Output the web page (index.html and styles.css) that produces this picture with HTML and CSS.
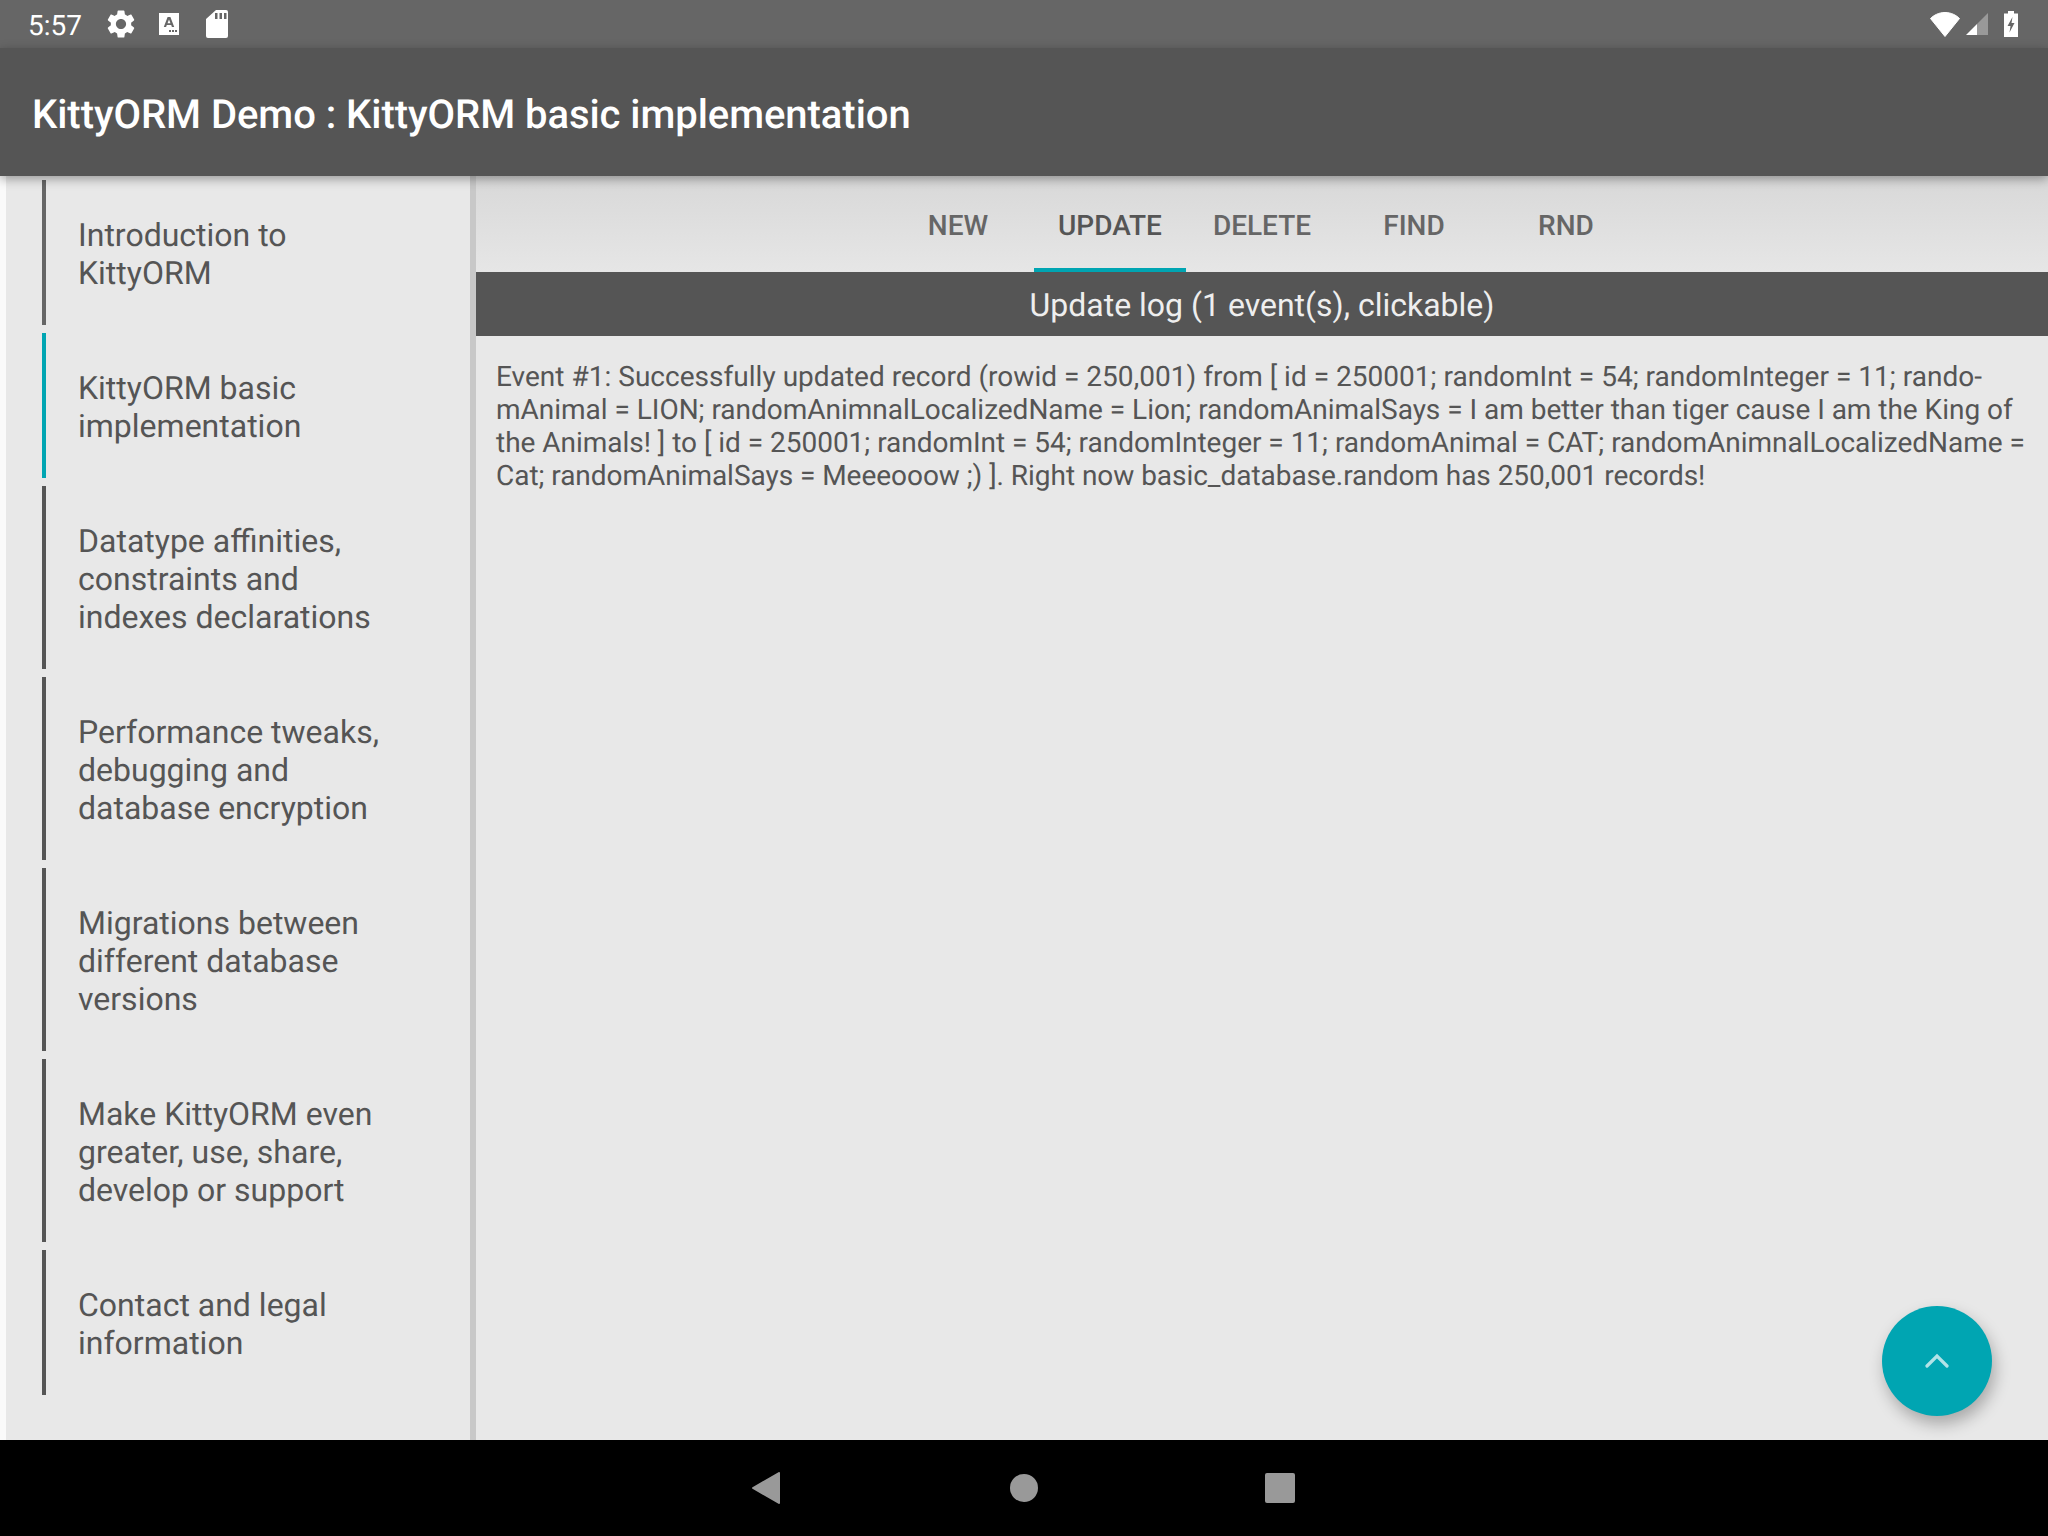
FILE: index.html
```html
<!DOCTYPE html>
<html>

<head>
    <meta charset="utf-8">
    <title>KittyORM Demo</title>
    <link rel="stylesheet" href="styles.css">
</head>

<body>
    <div class="screen">
        <div class="status">
            <span class="time">5:57</span>
            <svg class="ic-gear" viewBox="0 0 24 24"><path fill="#fff" d="M19.14 12.94c.04-.3.06-.61.06-.94 0-.32-.02-.64-.07-.94l2.03-1.58c.18-.14.23-.41.12-.61l-1.92-3.32c-.12-.22-.37-.29-.59-.22l-2.39.96c-.5-.38-1.03-.7-1.62-.94l-.36-2.54c-.04-.24-.24-.41-.48-.41h-3.84c-.24 0-.43.17-.47.41l-.36 2.54c-.59.24-1.13.57-1.62.94l-2.39-.96c-.22-.08-.47 0-.59.22L2.74 8.87c-.12.21-.08.47.12.61l2.03 1.58c-.05.3-.09.63-.09.94s.02.64.07.94l-2.03 1.58c-.18.14-.23.41-.12.61l1.92 3.32c.12.22.37.29.59.22l2.39-.96c.5.38 1.03.7 1.62.94l.36 2.54c.05.24.24.41.48.41h3.84c.24 0 .44-.17.47-.41l.36-2.54c.59-.24 1.13-.56 1.62-.94l2.39.96c.22.08.47 0 .59-.22l1.92-3.32c.12-.22.07-.47-.12-.61l-2.01-1.58zM12 15.6c-1.98 0-3.6-1.62-3.6-3.6s1.62-3.6 3.6-3.6 3.6 1.62 3.6 3.6-1.62 3.6-3.6 3.6z"/></svg>
            <svg class="ic-a" viewBox="0 0 20 22">
                <path fill="#fff" fill-rule="evenodd" d="M0 0h20v22H0zM8.600 4 4.800 14h2.300l.7-2h4.400l.7 2h2.300L11.400 4zM10 6.600 11.500 10.300h-3z"/>
                <rect x="10" y="17" width="2" height="2" fill="#666"/>
                <rect x="13" y="17" width="2" height="2" fill="#666"/>
                <rect x="16" y="17" width="2" height="2" fill="#666"/>
            </svg>
            <svg class="ic-sd" viewBox="0 0 22 28"><path fill="#fff" fill-rule="evenodd" d="M10 0h10a2 2 0 0 1 2 2v24a2 2 0 0 1-2 2H2a2 2 0 0 1-2-2V9zM9 3v6h2.500V3zM13.500 3v6H16V3zM18 3v6h2.500V3z"/></svg>
            <span class="status-gap"></span>
            <svg class="ic-wifi" viewBox="0 0 30 25"><path fill="#fff" stroke="#fff" stroke-linejoin="round" d="M15 24.500 .5 6.500C4 3 9 .5 15 .5s11 2.500 14.500 6z"/></svg>
            <svg class="ic-signal" viewBox="0 0 22 22"><path fill="#999" d="M22 0v22H11V11z"/><path fill="#fff" d="M0 22 11 11v11z"/></svg>
            <svg class="ic-batt" viewBox="0 0 14 26"><path fill="#fff" fill-rule="evenodd" d="M4 0h6v2.500h4V26H0V2.500h4zM8.500 6 3.500 15h3l-1 6.500 5-9.500H7.500z"/></svg>
        </div>

        <div class="appbar">KittyORM Demo : KittyORM basic implementation</div>

        <div class="content">
            <div class="sidebar">
                <div class="item item-first">Introduction to<br>KittyORM</div>
                <div class="item active">KittyORM basic<br>implementation</div>
                <div class="item">Datatype affinities,<br>constraints and<br>indexes declarations</div>
                <div class="item">Performance tweaks,<br>debugging and<br>database encryption</div>
                <div class="item">Migrations between<br>different database<br>versions</div>
                <div class="item">Make KittyORM even<br>greater, use, share,<br>develop or support</div>
                <div class="item">Contact and legal<br>information</div>
            </div>

            <div class="main">
                <div class="tabs">
                    <div class="tab">New</div>
                    <div class="tab on">Update</div>
                    <div class="tab">Delete</div>
                    <div class="tab">Find</div>
                    <div class="tab">Rnd</div>
                </div>
                <div class="loghead">Update log (1 event(s), clickable)</div>
                <div class="log">
                    <p class="log-wide">Event #1: Successfully updated record (rowid = 250,001) from [ id = 250001; randomInt = 54; randomInteger = 11; rando-</p>
                    <p>mAnimal = LION; randomAnimnalLocalizedName = Lion; randomAnimalSays = I am better than tiger cause I am the King of</p>
                    <p>the Animals! ] to [ id = 250001; randomInt = 54; randomInteger = 11; randomAnimal = CAT; randomAnimnalLocalizedName =</p>
                    <p class="log-tight">Cat; randomAnimalSays = Meeeooow ;) ]. Right now basic_database.random has 250,001 records!</p>
                </div>
                <div class="fab">
                    <svg viewBox="0 0 24 16"><path fill="none" stroke="#b2e3e7" stroke-width="3.200" stroke-linecap="round" d="M2 13 12 3l10 10"/></svg>
                </div>
            </div>
        </div>

        <div class="navbar">
            <div class="nav-cell"><svg class="ic-back" viewBox="0 0 28 32"><path fill="#999" stroke="#999" stroke-width="2" stroke-linejoin="round" d="M1 16 27 1v30z"/></svg></div>
            <div class="nav-cell"><div class="ic-home"></div></div>
            <div class="nav-cell"><div class="ic-recent"></div></div>
        </div>
    </div>
</body>

</html>
```

FILE: styles.css
```css
* {
    padding: 0;
    margin: 0;
    box-sizing: border-box;
}

body {
    background: #000;
    font-family: Roboto, "Liberation Sans", sans-serif;
    text-rendering: geometricPrecision;
}

.screen {
    width: 2048px;
    height: 1536px;
    display: flex;
    flex-direction: column;
    overflow: hidden;
}

/* status bar */
.status {
    height: 48px;
    background: #666;
    color: #fff;
    display: flex;
    align-items: center;
    padding: 0 30px 0 28px;
}

.time {
    font-size: 28px;
    width: 76px;
    padding-top: 2px;
}

.ic-gear {
    width: 34px;
    height: 34px;
}

.ic-a {
    width: 20px;
    height: 22px;
    margin-left: 21px;
}

.ic-sd {
    width: 22px;
    height: 28px;
    margin-left: 27px;
}

.status-gap {
    flex: 1;
}

.ic-wifi {
    width: 30px;
    height: 25px;
}

.ic-signal {
    width: 22px;
    height: 22px;
    margin-left: 6px;
}

.ic-batt {
    width: 14px;
    height: 26px;
    margin-left: 16px;
}

/* title */
.appbar {
    height: 128px;
    background: #555;
    color: #fff;
    font-size: 40px;
    font-weight: 500;
    line-height: 133px;
    letter-spacing: -0.05px;
    padding-left: 32px;
    position: relative;
    z-index: 2;
    box-shadow: 0 3px 10px rgba(0, 0, 0, 0.35);
}

.content {
    flex: 1;
    display: flex;
    background: #fafafa;
    min-height: 0;
}

/* left menu */
.sidebar {
    width: 464px;
    margin-left: 6px;
    background: #e8e8e8;
    padding: 4px 0 0 36px;
    display: flex;
    flex-direction: column;
    gap: 8px;
}

.item {
    border-left: 4px solid #555;
    padding: 36px 0 33px 32px;
    font-size: 32px;
    line-height: 38px;
    color: #555;
}

.item-first {
    border-left-color: #666;
}

.item.active {
    border-left-color: #00a5b2;
}

/* right side */
.main {
    flex: 1;
    position: relative;
    border-left: 6px solid #c8c8c8;
    background: #e8e8e8;
}

.tabs {
    height: 96px;
    display: flex;
    justify-content: center;
    background: linear-gradient(#d8d8d8, #e6e6e6);
}

.tab {
    width: 152px;
    font-size: 28px;
    font-weight: 500;
    line-height: 100px;
    text-align: center;
    text-transform: uppercase;
    color: #666;
}

.tab.on {
    color: #555;
    border-bottom: 4px solid #00a5b2;
}

.loghead {
    height: 64px;
    background: #555;
    color: #eee;
    font-size: 32px;
    line-height: 66px;
    text-align: center;
}

.log {
    padding: 24px 0 0 20px;
    font-size: 28px;
    line-height: 33px;
    color: #555;
    white-space: nowrap;
    letter-spacing: -0.02px;
}

.log .log-wide {
    letter-spacing: 0.02px;
}

.log .log-tight {
    letter-spacing: -0.04px;
}

.fab {
    position: absolute;
    left: 1406px;
    top: 1130px;
    width: 110px;
    height: 110px;
    border-radius: 50%;
    background: #00a5b2;
    box-shadow: 3px 8px 16px rgba(0, 0, 0, 0.28);
    display: flex;
    align-items: center;
    justify-content: center;
}

.fab svg {
    width: 24px;
    height: 16px;
}

/* nav bar */
.navbar {
    height: 96px;
    background: #000;
    display: flex;
    justify-content: center;
    align-items: center;
}

.nav-cell {
    width: 256px;
    display: flex;
    justify-content: center;
}

.ic-back {
    width: 28px;
    height: 32px;
    margin-right: 4px;
}

.ic-home {
    width: 28px;
    height: 28px;
    border-radius: 50%;
    background: #999;
}

.ic-recent {
    width: 30px;
    height: 30px;
    border-radius: 2px;
    background: #999;
}
```
